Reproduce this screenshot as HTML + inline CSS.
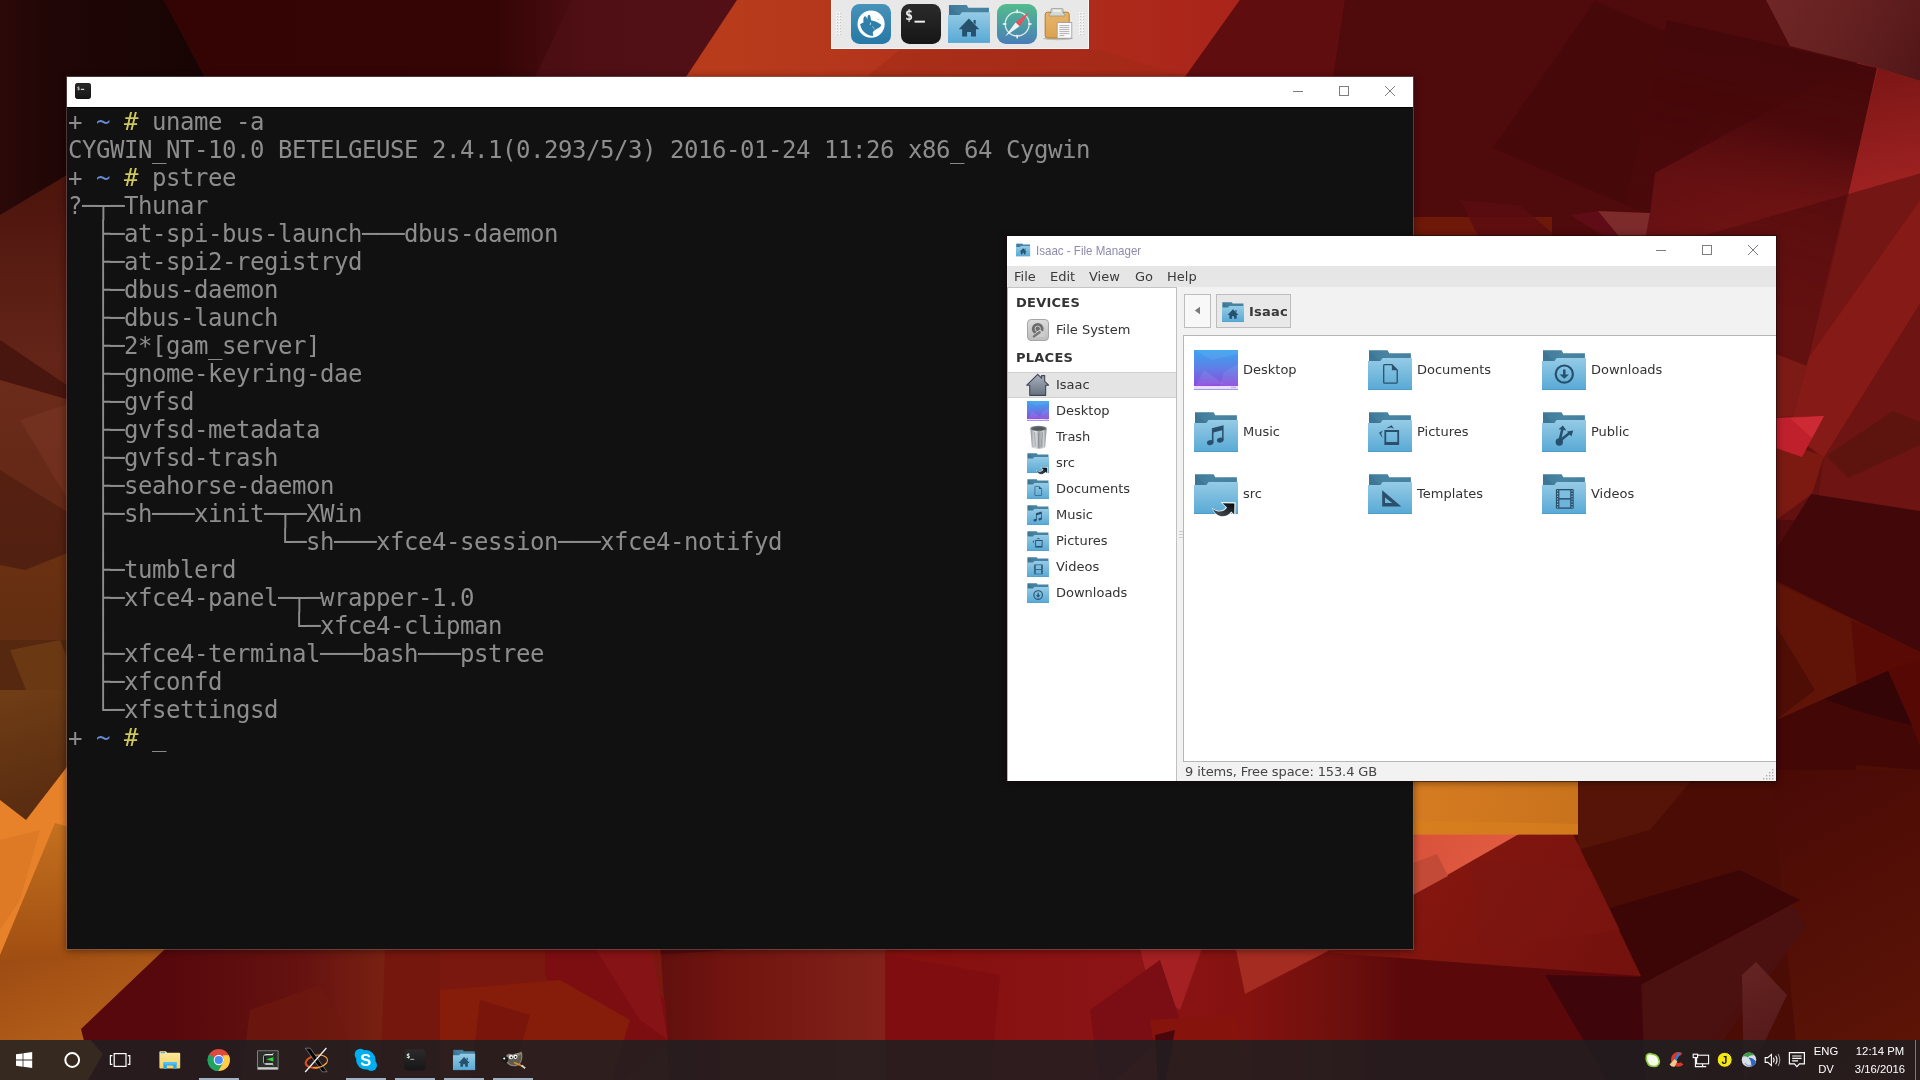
<!DOCTYPE html>
<html lang="en">
<head>
<meta charset="utf-8">
<title>Desktop</title>
<style>
*{box-sizing:border-box;margin:0;padding:0}
html,body{width:1920px;height:1080px;overflow:hidden;background:#4a0a0a;-webkit-font-smoothing:antialiased}
body{position:relative;font-family:"DejaVu Sans","Liberation Sans",sans-serif;font-size:13px;color:#333}
#wall{position:absolute;left:0;top:0;width:1920px;height:1080px;display:block}
.abs{position:absolute}
/* ---------- terminal ---------- */
#term{position:absolute;left:67px;top:77px;width:1346px;height:872px;background:#111;box-shadow:0 0 0 1px rgba(150,130,130,.4),0 1px 7px 1px rgba(0,0,0,.42)}
#term .tb{position:absolute;left:0;top:0;width:100%;height:30px;background:#fff;will-change:transform}
#term .body{position:absolute;left:0;top:30px;width:100%;height:842px;background:#111;border-top:1px solid #000}
#term pre{will-change:transform;position:absolute;left:1px;top:31px;font-family:"DejaVu Sans Mono","Liberation Mono",monospace;font-size:24px;line-height:28px;color:#8d8d8d;white-space:pre;letter-spacing:-.449px}
#term .b{color:#6789d6}
#term .y{color:#cfc85b}
.wbtn{position:absolute;top:0;height:30px;width:46px}
/* ---------- file manager ---------- */
#fm{position:absolute;left:1007px;top:236px;width:769px;height:545px;background:#f2f2f2;box-shadow:0 0 0 1px rgba(30,8,8,.55),0 1px 7px 1px rgba(0,0,0,.42);will-change:transform}
#fm .tb{position:absolute;left:0;top:0;width:100%;height:30px;background:#fff}
#fm .title{position:absolute;left:29px;top:0;line-height:29px;font-family:"Liberation Sans",sans-serif;font-size:13.4px;color:#8f8cab;white-space:nowrap;transform:scaleX(.862);transform-origin:0 0}
#fm .menu{position:absolute;left:0;top:30px;width:100%;height:21px;background:#e6e6e6}
#fm .menu span{position:absolute;top:0;line-height:21px;font-size:13px;color:#3a3a3a}
#fm .side{position:absolute;left:0;top:51px;width:170px;height:494px;background:#fff;border-left:1px solid #b4b4b4;border-right:1px solid #c0c0c0;border-top:1px solid #c4c4c4}
#fm .side .h{position:absolute;left:8px;font-weight:bold;font-size:13px;color:#333;line-height:16px;letter-spacing:.25px}
#fm .side .r{position:absolute;left:0;width:168px;height:26px}
#fm .side .r.sel{background:#e4e4e4;border-top:1px solid #d0d0d0;border-bottom:1px solid #d0d0d0}
#fm .side .r span{position:absolute;left:48px;top:0;line-height:26px;font-size:13px;color:#333}
#fm .side .r.sel span,#fm .side .r.sel svg{margin-top:-1px}
#fm .grip{position:absolute;left:171.5px;top:295px;width:4px;height:7px;border-top:1px solid #cfcfcf;border-bottom:1px solid #cfcfcf}
#fm .grip:after{content:"";position:absolute;left:0;top:2px;width:4px;height:1px;background:#cfcfcf}
#fm .pbtn{position:absolute;top:58px;height:34px;border:1px solid #bdbdbd;background:#f8f8f8}
#fm .pbtn.on{background:#e8e8e8}
#fm .pbtn b{position:absolute;left:32px;top:0;line-height:33px;font-size:13px;color:#383838;letter-spacing:.25px}
#fm .view{position:absolute;left:176px;top:99px;width:593px;height:427px;background:#fff;border:1px solid #b6b6b6;border-right:none}
#fm .it{position:absolute;width:170px;height:40px}
#fm .it span{position:absolute;left:49px;top:0;line-height:39px;font-size:13px;color:#333}
#fm .status{position:absolute;left:178px;top:526px;line-height:19px;font-size:13px;color:#444;letter-spacing:-.12px}
/* ---------- xfce panel ---------- */
#panel{will-change:transform;position:absolute;left:831px;top:0;width:258px;height:49px;background:#e8e8e8;border:1px solid #f8f8f8;border-top:none}
/* ---------- taskbar ---------- */
#task{position:absolute;left:0;top:1040px;width:1920px;height:40px;background:rgba(31,31,33,.85);will-change:transform}
#task .tx{position:absolute;color:#fff;font-family:"Liberation Sans",sans-serif;font-size:11.3px;line-height:14px;text-align:center}
#task .ul{position:absolute;top:38px;height:2px;width:40px;background:#9fb3c4}
</style>
</head>
<body>
<!--WALL-->
<svg id="wall" viewBox="0 0 1920 1080"><defs><linearGradient id="g1" gradientUnits="userSpaceOnUse" x1="0" y1="0" x2="200" y2="0"><stop offset="0" stop-color="#2b0909"/><stop offset="0.25" stop-color="#210606"/><stop offset="1" stop-color="#180404"/></linearGradient><linearGradient id="g2" gradientUnits="userSpaceOnUse" x1="200" y1="0" x2="740" y2="0"><stop offset="0" stop-color="#340404"/><stop offset="0.55" stop-color="#350505"/><stop offset="0.7" stop-color="#4a0d12"/><stop offset="1" stop-color="#551118"/></linearGradient><linearGradient id="g3" gradientUnits="userSpaceOnUse" x1="737" y1="0" x2="1240" y2="0"><stop offset="0" stop-color="#b83b1c"/><stop offset="0.5" stop-color="#b0301b"/><stop offset="1" stop-color="#aa241a"/></linearGradient><linearGradient id="g4" gradientUnits="userSpaceOnUse" x1="1650" y1="260" x2="1920" y2="100"><stop offset="0" stop-color="#6a1214"/><stop offset="0.45" stop-color="#7e1818"/><stop offset="1" stop-color="#9a2020"/></linearGradient><linearGradient id="g5" gradientUnits="userSpaceOnUse" x1="1770" y1="0" x2="1920" y2="80"><stop offset="0" stop-color="#702626"/><stop offset="0.5" stop-color="#642020"/><stop offset="1" stop-color="#521618"/></linearGradient><linearGradient id="g6" gradientUnits="userSpaceOnUse" x1="1880" y1="70" x2="1900" y2="190"><stop offset="0" stop-color="#7c1616"/><stop offset="1" stop-color="#a02222"/></linearGradient><linearGradient id="gB" gradientUnits="userSpaceOnUse" x1="1772" y1="44" x2="1716" y2="290"><stop offset="0" stop-color="#45080a"/><stop offset="0.35" stop-color="#47080a"/><stop offset="1" stop-color="#5a0c0e"/></linearGradient><linearGradient id="gBm" gradientUnits="userSpaceOnUse" x1="1772" y1="44" x2="1716" y2="290"><stop offset="0" stop-color="#fff" stop-opacity="1"/><stop offset="0.3" stop-color="#fff" stop-opacity="0.92"/><stop offset="0.6" stop-color="#fff" stop-opacity="0.4"/><stop offset="1" stop-color="#fff" stop-opacity="0"/></linearGradient><mask id="mB" maskUnits="userSpaceOnUse" x="1500" y="0" width="420" height="500"><polygon points="1667,20 1877,68 1795,429 1585,381" fill="url(#gBm)"/></mask><linearGradient id="g8" gradientUnits="userSpaceOnUse" x1="1780" y1="780" x2="1920" y2="1040"><stop offset="0" stop-color="#4a0a06"/><stop offset="1" stop-color="#5c1406"/></linearGradient><linearGradient id="g9" gradientUnits="userSpaceOnUse" x1="1745" y1="960" x2="1780" y2="1040"><stop offset="0" stop-color="#642422"/><stop offset="1" stop-color="#561a1a"/></linearGradient><linearGradient id="g10" gradientUnits="userSpaceOnUse" x1="1420" y1="850" x2="1640" y2="980"><stop offset="0" stop-color="#86170f"/><stop offset="1" stop-color="#72110e"/></linearGradient><linearGradient id="g11" gradientUnits="userSpaceOnUse" x1="1413" y1="834" x2="1500" y2="880"><stop offset="0" stop-color="#d8523a"/><stop offset="1" stop-color="#e25c42"/></linearGradient><linearGradient id="g12" gradientUnits="userSpaceOnUse" x1="1413" y1="781" x2="1578" y2="834"><stop offset="0" stop-color="#d67c22"/><stop offset="1" stop-color="#c8721c"/></linearGradient><linearGradient id="g13" gradientUnits="userSpaceOnUse" x1="860" y1="0" x2="1400" y2="0"><stop offset="0" stop-color="#84120f"/><stop offset="0.15" stop-color="#86100f"/><stop offset="0.5" stop-color="#8c1416"/><stop offset="0.72" stop-color="#84120f"/><stop offset="0.9" stop-color="#6c100d"/><stop offset="1" stop-color="#5c090b"/></linearGradient><linearGradient id="g14" gradientUnits="userSpaceOnUse" x1="652" y1="0" x2="885" y2="0"><stop offset="0" stop-color="#5f0f0d"/><stop offset="0.3" stop-color="#70140f"/><stop offset="1" stop-color="#82221a"/></linearGradient><linearGradient id="g15" gradientUnits="userSpaceOnUse" x1="165" y1="0" x2="440" y2="0"><stop offset="0" stop-color="#57080c"/><stop offset="0.5" stop-color="#651210"/><stop offset="0.85" stop-color="#7c2412"/><stop offset="1" stop-color="#761a0e"/></linearGradient><linearGradient id="g16" gradientUnits="userSpaceOnUse" x1="0" y1="950" x2="60" y2="1085"><stop offset="0" stop-color="#9c4a13"/><stop offset="1" stop-color="#b9631b"/></linearGradient><linearGradient id="g17" gradientUnits="userSpaceOnUse" x1="0" y1="200" x2="0" y2="560"><stop offset="0" stop-color="#4f160e"/><stop offset="0.45" stop-color="#642518"/><stop offset="0.7" stop-color="#572011"/><stop offset="1" stop-color="#522010"/></linearGradient><linearGradient id="g18" gradientUnits="userSpaceOnUse" x1="0" y1="560" x2="0" y2="700"><stop offset="0" stop-color="#6a3012"/><stop offset="1" stop-color="#5c2c10"/></linearGradient><linearGradient id="g19" gradientUnits="userSpaceOnUse" x1="0" y1="700" x2="40" y2="820"><stop offset="0" stop-color="#6e3c15"/><stop offset="1" stop-color="#582b10"/></linearGradient><linearGradient id="g20" gradientUnits="userSpaceOnUse" x1="0" y1="823" x2="0" y2="960"><stop offset="0" stop-color="#c4701f"/><stop offset="1" stop-color="#a04e12"/></linearGradient></defs><rect width="1920" height="1080" fill="#520b0d"/>
<polygon points="0,0 164,0 205,77 240,140 67,180 0,215" fill="url(#g1)"/>
<polygon points="164,0 737,0 686,77 640,150 240,140 205,77" fill="url(#g2)"/>
<polygon points="572,0 737,0 686,77 535,77" fill="#521016" fill-opacity="0.6"/>
<polygon points="737,0 1240,0 1185,77 1150,130 650,130 686,77" fill="url(#g3)"/>
<polygon points="900,50 1100,50 1185,77 1150,130 800,130" fill="#a02a16" fill-opacity="0.5"/>
<polygon points="1240,0 1345,0 1330,100 1300,240 1150,240 1185,77" fill="#600d10"/>
<polygon points="1345,0 1920,0 1920,240 1300,240 1330,100" fill="#4f0a0c"/>
<polygon points="1700,236.8 1920,173.7 1920,520 1700,520" fill="#621010"/>
<polygon points="1847,194.7 1920,173.7 1920,200 1809,357" fill="#741614"/>
<polygon points="1920,200 1809,357 1792.6,416.7 1800,440 1823.7,458 1920,304" fill="#861a16"/>
<polygon points="1920,304 1823.7,458 1815,520 1920,520" fill="#6e1412"/>
<polygon points="1776,354 1807,366 1792.6,416.7 1776,417" fill="#7c1a16"/>
<polygon points="1776,440 1824,456 1812,494 1776,520" fill="#7c1a12"/>
<polygon points="1595,1 1493,148 1650,215 1752,69" fill="#47080a"/>
<polygon points="1655,173 1920,29 1920,173.7 1600,265.5 1650,215" fill="url(#g4)"/>
<polygon points="1766,0 1790,46 1878,68 1920,81 1920,0" fill="url(#g5)"/>
<polygon points="1878,68 1920,81 1920,173 1848,194" fill="url(#g6)"/>
<rect x="1500" y="0" width="420" height="500" fill="url(#gB)" mask="url(#mB)"/>
<polygon points="1413,217 1552,217 1552,240 1413,240" fill="#6e1809"/>
<polygon points="1460,200 1520,205 1560,240 1480,240" fill="#5a0c12" fill-opacity="0.8"/>
<polygon points="1598,211 1644,236 1610,240 1570,215" fill="#600c16"/>
<polygon points="1598,211 1650,213 1645,240 1622,240" fill="#7c2a2a"/>
<polygon points="1770,418 1824,416 1802,457 1770,446" fill="#c0202c"/>
<polygon points="1790,418 1824,416 1812,438" fill="#cc2a34"/>
<polygon points="1826,456 1893,411 1920,422 1920,445 1848,478" fill="#5e140e"/>
<polygon points="1811,494 1920,511 1920,652 1776,581 1770,560" fill="#420809"/>
<polygon points="1776,581 1920,652 1920,760 1776,760" fill="#5a1006"/>
<polygon points="1776,583 1858,622 1857,687 1776,720" fill="#601408"/>
<polygon points="1776,626 1815,690 1776,720" fill="#4e0e06"/>
<polygon points="1851,620 1920,652 1920,662 1893,668 1857,687" fill="#5a0a04"/>
<polygon points="1776,720 1824,699 1888,671 1920,740 1920,800 1776,800" fill="#430806"/>
<polygon points="1888,671 1893,668 1920,660 1920,745" fill="#560804"/>
<polygon points="1824,699 1888,671 1912,725.5 1864,713" fill="#340506"/>
<polygon points="1856,765 1920,770 1920,800 1850,800" fill="#4e0e04"/>
<polygon points="1400,770 1920,770 1920,1085 1400,1085" fill="#4a0c05"/>
<polygon points="1770,770 1920,770 1920,1085 1800,1085" fill="url(#g8)"/>
<polygon points="1578,770 1700,770 1650,830 1578,850" fill="#561408"/>
<polygon points="1608,910 1780,888 1806,926 1670,1085 1640,1085" fill="#4a1010"/>
<polygon points="1644,984 1782,889 1806,927 1690,1085 1640,1085" fill="#4c1212" fill-opacity="0.7"/>
<polygon points="1610,908 1740,870 1800,900 1640,985" fill="#3c0606"/>
<polygon points="1756,962 1787,995 1744,1085 1742,975" fill="url(#g9)"/>
<polygon points="1400,950 1640,975 1645,1085 1400,1085" fill="#5a080a"/>
<polygon points="1545,975 1641,977 1645,1085 1610,1085" fill="#3e060b"/>
<polygon points="1519,834 1573,834 1641,976 1400,958 1400,900" fill="url(#g10)"/>
<polygon points="1470,860 1590,868 1620,930 1480,950" fill="#7c1611" fill-opacity="0.6"/>
<polygon points="1400,834 1519,834 1400,902" fill="url(#g11)"/>
<polygon points="1400,868 1437,854 1448,876 1400,902" fill="#c24a36"/>
<polygon points="1400,775 1578,775 1578,834.5 1400,834.5" fill="url(#g12)"/>
<polygon points="1400,820 1578,824 1578,834.5 1400,834.5" fill="#d8801e" fill-opacity="0.6"/>
<polygon points="860,940 1400,940 1400,1085 860,1085" fill="url(#g13)"/>
<polygon points="1138,940 1205,940 1180,1010 1150,990" fill="#a42022"/>
<polygon points="1236,950 1330,950 1245,994" fill="#a42c20"/>
<polygon points="1090,1010 1160,960 1180,1020 1110,1085 1100,1085" fill="#7a0e14"/>
<polygon points="1150,1020 1235,1015 1250,1085 1160,1085" fill="#86140c"/>
<polygon points="1155,1035 1175,1030 1165,1085 1158,1085" fill="#4a060c"/>
<polygon points="885,955 1000,975 990,1085 880,1085" fill="#7e0e11" fill-opacity="0.8"/>
<polygon points="652,955 885,940 885,1085 669,1085" fill="url(#g14)"/>
<polygon points="440,940 660,940 670,1085 440,1085" fill="#7a170e"/>
<polygon points="545,950 600,940 665,1000 668,1040 620,1085 545,975" fill="#7c0e12"/>
<polygon points="590,940 652,950 668,1040 640,1020" fill="#861315"/>
<polygon points="440,990 560,980 630,1020 610,1085 440,1085" fill="#861d0a"/>
<polygon points="480,1000 530,1015 510,1085 470,1085" fill="#7a150b"/>
<polygon points="165,940 440,940 440,1085 95,1085 81,1029" fill="url(#g15)"/>
<polygon points="250,1010 320,985 350,1040 350,1085 240,1085" fill="#6e1a0f" fill-opacity="0.7"/>
<polygon points="385,950 440,945 440,1085 380,1085" fill="#76170e"/>
<polygon points="0,820 60,820 180,930 165,949 81,1029 95,1085 0,1085" fill="url(#g16)"/>
<polygon points="0,215 67,175 80,175 80,600 0,600" fill="url(#g17)"/>
<polygon points="0,340 80,394 80,403 0,380" fill="#48160f"/>
<polygon points="0,380 80,403 80,520 0,470" fill="#7a3622" fill-opacity="0.45"/>
<polygon points="20,420 80,400 80,520" fill="#7c3824" fill-opacity="0.5"/>
<polygon points="0,565 25,570 80,548 80,720 0,720" fill="url(#g18)"/>
<polygon points="0,640 80,640 80,700 0,720" fill="#55280f"/>
<polygon points="10,650 60,640 80,690 30,700" fill="#7a4218" fill-opacity="0.6"/>
<polygon points="0,700 80,700 80,960 0,960" fill="#e8822a"/>
<polygon points="0,690 80,690 80,750 26,820 0,800" fill="url(#g19)"/>
<polygon points="55,823 80,830 80,960 0,960 0,955" fill="url(#g20)"/>
<polygon points="0,840 40,830 20,900 0,930" fill="#de7a26"/>
<polygon points="1330,940 1400,940 1400,958 1330,953" fill="#7c140f"/>
<polygon points="0,1040 140,1040 140,1080 0,1080" fill="#58090c"/>
<polygon points="0,1040 90.5,1040 103,1054 88,1080 0,1080" fill="#b9631b"/></svg>
<!--/WALL-->

<!--TERM-->
<div id="term">
<div class="tb"><svg style="position:absolute;left:8px;top:6px" width="16" height="16"><defs><linearGradient id="tig" x1="0" y1="0" x2="0" y2="1"><stop offset="0" stop-color="#2a2a2a"/><stop offset="1" stop-color="#161616"/></linearGradient></defs><rect x="0" y="0" width="16" height="16" rx="3.4" fill="url(#tig)" stroke="#0c0c0c" stroke-width=".6"/><text x="2" y="6.8" font-family="DejaVu Sans Mono,Liberation Mono,monospace" font-weight="bold" font-size="5" fill="#d8d8d8">$</text><rect x="5.8" y="5.8" width="3.4" height="1.1" fill="#e6e6e6"/></svg>
<svg class="wbtn" style="right:92px" width="46" height="30"><path d="M18,14.5 H28" stroke="#7d7d7d" stroke-width="1"/></svg>
<svg class="wbtn" style="right:46px" width="46" height="30"><rect x="18.5" y="9.5" width="9" height="9" fill="none" stroke="#7d7d7d" stroke-width="1"/></svg>
<svg class="wbtn" style="right:0" width="46" height="30"><path d="M18,9 L28,19 M28,9 L18,19" stroke="#7d7d7d" stroke-width="1" fill="none"/></svg></div>
<div class="body"></div>
<pre>+ <span class="b">~</span> <span class="y">#</span> uname -a
CYGWIN_NT-10.0 BETELGEUSE 2.4.1(0.293/5/3) 2016-01-24 11:26 x86_64 Cygwin
+ <span class="b">~</span> <span class="y">#</span> pstree
?─┬─Thunar
  ├─at-spi-bus-launch───dbus-daemon
  ├─at-spi2-registryd
  ├─dbus-daemon
  ├─dbus-launch
  ├─2*[gam_server]
  ├─gnome-keyring-dae
  ├─gvfsd
  ├─gvfsd-metadata
  ├─gvfsd-trash
  ├─seahorse-daemon
  ├─sh───xinit─┬─XWin
  │            └─sh───xfce4-session───xfce4-notifyd
  ├─tumblerd
  ├─xfce4-panel─┬─wrapper-1.0
  │             └─xfce4-clipman
  ├─xfce4-terminal───bash───pstree
  ├─xfconfd
  └─xfsettingsd
+ <span class="b">~</span> <span class="y">#</span> _</pre>
</div>
<!--/TERM-->

<!--FM-->

<svg width="0" height="0" style="position:absolute">
<defs>
<linearGradient id="ff" x1="0" y1="0" x2="0" y2="1"><stop offset="0" stop-color="#95cbe6"/><stop offset="1" stop-color="#58a9d5"/></linearGradient>
<linearGradient id="fb" x1="0" y1="0" x2="1" y2="0"><stop offset="0" stop-color="#3f7a99"/><stop offset="0.45" stop-color="#4a84a3"/><stop offset="1" stop-color="#46809f"/></linearGradient>
<linearGradient id="dk" x1="0" y1="0" x2="0" y2="1"><stop offset="0" stop-color="#3aa4f0"/><stop offset="0.45" stop-color="#5f7fe6"/><stop offset="1" stop-color="#9440da"/></linearGradient>
<linearGradient id="hs" x1="0" y1="0" x2="0" y2="1"><stop offset="0" stop-color="#aab2bf"/><stop offset="1" stop-color="#66717f"/></linearGradient>
<linearGradient id="tr" x1="0" y1="0" x2="1" y2="0"><stop offset="0" stop-color="#8e9296"/><stop offset="0.3" stop-color="#e4e6e8"/><stop offset="0.55" stop-color="#a2a6aa"/><stop offset="0.8" stop-color="#d0d2d4"/><stop offset="1" stop-color="#85898d"/></linearGradient>
<linearGradient id="hd" x1="0" y1="0" x2="0" y2="1"><stop offset="0" stop-color="#dcdcdc"/><stop offset="1" stop-color="#bcbcbc"/></linearGradient>
<linearGradient id="arw" x1="0" y1="1" x2="1" y2="0"><stop offset="0" stop-color="#555"/><stop offset="0.5" stop-color="#2a3238"/><stop offset="1" stop-color="#050505"/></linearGradient>
<symbol id="fold" viewBox="0 0 44 40">
<path d="M1,0.3 H19.6 L21.3,3.2 H42.9 V14 H1 Z" fill="url(#fb)"/>
<path d="M1,1 L12,11 H1 Z" fill="#3a7391" opacity=".55"/>
<path d="M0,11 H12.4 L14.6,8.1 H44 V40 H0 Z" fill="url(#ff)"/>
<rect x="0" y="39" width="44" height="1" fill="#4d9dca"/>
</symbol>
<symbol id="g-doc" viewBox="0 0 44 40"><path d="M16.6,14.7 H23.9 L29.2,20 V32.2 Q29.2,33.1 28.3,33.1 H16.6 Q15.7,33.1 15.7,32.2 V15.6 Q15.7,14.7 16.6,14.7 Z" fill="none" stroke="#2b516c" stroke-width="1.3"/><path d="M23.9,14.4 L29.6,20.2 H23.9 Z" fill="#2b516c"/></symbol>
<symbol id="g-down" viewBox="0 0 44 40"><circle cx="22.3" cy="24.1" r="8.6" fill="none" stroke="#27506c" stroke-width="2.2"/><path d="M21.05,19.4 H23.55 V24.4 H27 L22.3,28.8 L17.6,24.4 H21.05 Z" fill="#27506c"/></symbol>
<symbol id="g-music" viewBox="0 0 44 40"><g fill="#2a4f6b"><ellipse cx="16.2" cy="30.6" rx="3.3" ry="2.5" transform="rotate(-15 16.2 30.6)"/><ellipse cx="26.2" cy="28.2" rx="3.3" ry="2.5" transform="rotate(-15 26.2 28.2)"/><path d="M17.9,16.3 L29.6,13.2 V28.2 H28.1 V18.2 L19.5,20.5 V30.6 H17.9 Z"/></g></symbol>
<symbol id="g-pic" viewBox="0 0 44 40"><g fill="#2a4f6b"><path d="M16.4,18.1 H31.1 V33.1 H16.4 Z M18.2,19.9 V30 H29.3 V19.9 Z" fill-rule="evenodd"/><path d="M18,16.6 L23.6,13.3 L26,16.8 L23,15.6 Z"/><path d="M11,20.7 L14.8,18.6 L13.2,21.6 L14.8,26.6 Z"/></g></symbol>
<symbol id="g-pub" viewBox="0 0 44 40"><g fill="#27506c" stroke="#27506c"><circle cx="17.3" cy="30" r="3.7" stroke="none"/><path d="M18,27 L20.3,17.5" stroke-width="2.6" fill="none"/><path d="M19.5,27.6 L27.5,21" stroke-width="2.6" fill="none"/><path d="M20.9,13.6 L24.4,18.4 L16.6,17.2 Z" stroke="none"/><path d="M31.2,18.6 L29.4,24.4 L25,19.4 Z" stroke="none"/></g></symbol>
<symbol id="g-tmpl" viewBox="0 0 44 40"><path d="M14.2,16.2 V32.6 H33.3 Z M17,23.6 L24.3,29.1 H17 Z" fill="#2a4f6b" fill-rule="evenodd"/></symbol>
<symbol id="g-vid" viewBox="0 0 44 40"><g><rect x="13.9" y="15" width="17.8" height="19.7" rx="1.2" fill="#2a4f6b"/><rect x="17.4" y="16.3" width="10.8" height="7.8" fill="#7cbde0"/><rect x="17.4" y="25.6" width="10.8" height="7.8" fill="#6db4dc"/><g fill="#8cc6e4"><rect x="15" y="16.3" width="1.2" height="1.2"/><rect x="15" y="19" width="1.2" height="1.2"/><rect x="15" y="21.7" width="1.2" height="1.2"/><rect x="15" y="24.4" width="1.2" height="1.2"/><rect x="15" y="27.1" width="1.2" height="1.2"/><rect x="15" y="29.8" width="1.2" height="1.2"/><rect x="15" y="32.5" width="1.2" height="1.2"/><rect x="29.4" y="16.3" width="1.2" height="1.2"/><rect x="29.4" y="19" width="1.2" height="1.2"/><rect x="29.4" y="21.7" width="1.2" height="1.2"/><rect x="29.4" y="24.4" width="1.2" height="1.2"/><rect x="29.4" y="27.1" width="1.2" height="1.2"/><rect x="29.4" y="29.8" width="1.2" height="1.2"/><rect x="29.4" y="32.5" width="1.2" height="1.2"/></g></g></symbol>
<symbol id="g-home" viewBox="0 0 44 40"><g fill="#27506c"><path d="M21.9,14.6 L32.8,25.9 H11.2 Z"/><path d="M14.8,25 H29.3 V33.4 H24.1 V28.6 H20 V33.4 H14.8 Z"/><path d="M26.8,16 H29 V21 L26.8,18.8 Z"/></g></symbol>
<symbol id="g-link" viewBox="0 0 44 44"><path d="M26.5,28 L41.6,28.2 L41.4,43 L37.4,39 C32,45.6 22,45.4 17.8,33.4 C23.4,38.4 29.2,37.2 31.8,33.2 Z" fill="#fff" opacity=".9"/><path d="M28.6,29.2 L40.4,29.4 L40.2,40.6 L37.2,37.4 C32,44.4 23,44.2 18.8,35 C24.4,39.2 30.2,38 33,33.6 Z" fill="url(#arw)"/></symbol>
<symbol id="desk" viewBox="0 0 44 40"><rect width="44" height="40" fill="url(#dk)"/><path d="M0,0 L18,10 L44,4 V0 Z" fill="#fff" opacity=".07"/><path d="M2,36 L10,20 L30,34 Z" fill="#fff" opacity=".08"/><path d="M26,36 L30,22 L44,14 V36 Z" fill="#fff" opacity=".07"/><rect y="36" width="44" height="3" fill="#f0dcf8"/><rect y="39" width="44" height="1" fill="#8ea0ee"/><rect x="37" y="36.6" width="5" height="1.6" fill="#cbb6dc"/></symbol>
<symbol id="house" viewBox="0 0 22 22"><path d="M11,1.2 L14.6,4.8 V2.4 H17.4 V7.6 L21,11.2 H18.3 V20.5 H3.7 V11.2 H1 Z" fill="url(#hs)" stroke="#3c4654" stroke-width="1" stroke-linejoin="round"/></symbol>
<symbol id="hdd" viewBox="0 0 22 22"><rect x="0.5" y="0.5" width="21" height="21" rx="3.6" fill="url(#hd)" stroke="#a6a6a6"/><circle cx="10.7" cy="9.8" r="5.9" fill="#6c6c6c"/><path d="M10.7,9.8 L18,13.6 V18 H8.4 Z" fill="#cdcdcd"/><circle cx="10.7" cy="9.8" r="2.7" fill="#6c6c6c" stroke="#d6d6d6" stroke-width=".9"/><path d="M12.8,13 L6.8,17.6" stroke="#d2d2d2" stroke-width="3.8" stroke-linecap="round"/><path d="M12.6,13.2 L6.8,17.6" stroke="#787878" stroke-width="2.5" stroke-linecap="round"/></symbol>
<symbol id="trash" viewBox="0 0 22 24" preserveAspectRatio="none"><path d="M3.2,3.4 L4.6,21.6 Q11,24.6 17.4,21.6 L18.8,3.4 Z" fill="url(#tr)"/><ellipse cx="11" cy="3.4" rx="7.8" ry="2.6" fill="#7b7f83"/><ellipse cx="11" cy="3.6" rx="6.4" ry="1.8" fill="#55595d"/><path d="M7.4,7 L7.9,21.4 M11,7.4 V22.2 M14.6,7 L14.1,21.4" stroke="#7a7e82" stroke-width=".9" opacity=".7" fill="none"/></symbol>
</defs></svg>
<div id="fm">
<div class="tb"><svg class="wbtn" style="right:92px" width="46" height="30"><path d="M18,14.5 H28" stroke="#7d7d7d" stroke-width="1"/></svg>
<svg class="wbtn" style="right:46px" width="46" height="30"><rect x="18.5" y="9.5" width="9" height="9" fill="none" stroke="#7d7d7d" stroke-width="1"/></svg>
<svg class="wbtn" style="right:0" width="46" height="30"><path d="M18,9 L28,19 M28,9 L18,19" stroke="#7d7d7d" stroke-width="1" fill="none"/></svg></div>
<svg style="position:absolute;left:8.8px;top:7.2px;overflow:visible" width="14.4" height="13.8" viewBox="0 0 44 40"><use href="#fold"/><use href="#g-home"/></svg>
<div class="title">Isaac - File Manager</div>
<div class="menu"><span style="left:7px">File</span><span style="left:43px">Edit</span><span style="left:82px">View</span><span style="left:128px">Go</span><span style="left:160px">Help</span></div>
<div class="side">
<div class="h" style="top:7px">DEVICES</div>
<div class="h" style="top:62px">PLACES</div>
<div class="r" style="top:29px"><svg style="position:absolute;left:19px;top:2px" width="22" height="22"><use href="#hdd" width="22" height="22"/></svg><span>File System</span></div>
<div class="r sel" style="top:84px"><svg style="position:absolute;left:17.4px;top:0.6px" width="25.4" height="24"><use href="#house" width="25.4" height="24"/></svg><span>Isaac</span></div>
<div class="r" style="top:110px"><svg style="position:absolute;left:19px;top:3px" width="22" height="20"><use href="#desk" width="22" height="20"/></svg><span>Desktop</span></div>
<div class="r" style="top:136px"><svg style="position:absolute;left:18.6px;top:0.8px" width="23" height="24.6"><use href="#trash" width="23" height="24.6"/></svg><span>Trash</span></div>
<div class="r" style="top:162px"><svg style="position:absolute;left:19px;top:3px;overflow:visible" width="22" height="20" viewBox="0 0 44 40"><use href="#fold"/><use href="#g-link" width="44" height="44"/></svg><span>src</span></div>
<div class="r" style="top:188px"><svg style="position:absolute;left:19px;top:3px;overflow:visible" width="22" height="20" viewBox="0 0 44 40"><use href="#fold"/><use href="#g-doc"/></svg><span>Documents</span></div>
<div class="r" style="top:214px"><svg style="position:absolute;left:19px;top:3px;overflow:visible" width="22" height="20" viewBox="0 0 44 40"><use href="#fold"/><use href="#g-music"/></svg><span>Music</span></div>
<div class="r" style="top:240px"><svg style="position:absolute;left:19px;top:3px;overflow:visible" width="22" height="20" viewBox="0 0 44 40"><use href="#fold"/><use href="#g-pic"/></svg><span>Pictures</span></div>
<div class="r" style="top:266px"><svg style="position:absolute;left:19px;top:3px;overflow:visible" width="22" height="20" viewBox="0 0 44 40"><use href="#fold"/><use href="#g-vid"/></svg><span>Videos</span></div>
<div class="r" style="top:292px"><svg style="position:absolute;left:19px;top:3px;overflow:visible" width="22" height="20" viewBox="0 0 44 40"><use href="#fold"/><use href="#g-down"/></svg><span>Downloads</span></div>
</div>
<div class="grip"></div>
<div class="pbtn" style="left:177px;width:27px"><svg width="25" height="31" style="position:absolute;left:0;top:0"><path d="M15,11.8 V19.2 L9.8,15.5 Z" fill="#7a7a7a"/></svg></div>
<div class="pbtn on" style="left:209px;width:75px"><svg style="position:absolute;left:5px;top:7px;overflow:visible" width="22" height="20" viewBox="0 0 44 40"><use href="#fold"/><use href="#g-home"/></svg><b>Isaac</b></div>
<div class="view">
<div class="it" style="left:10px;top:14px"><svg style="position:absolute;left:0px;top:0px" width="44" height="40"><use href="#desk" width="44" height="40"/></svg><span>Desktop</span></div>
<div class="it" style="left:184px;top:14px"><svg style="position:absolute;left:0px;top:0px;overflow:visible" width="44" height="40" viewBox="0 0 44 40"><use href="#fold"/><use href="#g-doc"/></svg><span>Documents</span></div>
<div class="it" style="left:358px;top:14px"><svg style="position:absolute;left:0px;top:0px;overflow:visible" width="44" height="40" viewBox="0 0 44 40"><use href="#fold"/><use href="#g-down"/></svg><span>Downloads</span></div>
<div class="it" style="left:10px;top:76px"><svg style="position:absolute;left:0px;top:0px;overflow:visible" width="44" height="40" viewBox="0 0 44 40"><use href="#fold"/><use href="#g-music"/></svg><span>Music</span></div>
<div class="it" style="left:184px;top:76px"><svg style="position:absolute;left:0px;top:0px;overflow:visible" width="44" height="40" viewBox="0 0 44 40"><use href="#fold"/><use href="#g-pic"/></svg><span>Pictures</span></div>
<div class="it" style="left:358px;top:76px"><svg style="position:absolute;left:0px;top:0px;overflow:visible" width="44" height="40" viewBox="0 0 44 40"><use href="#fold"/><use href="#g-pub"/></svg><span>Public</span></div>
<div class="it" style="left:10px;top:138px"><svg style="position:absolute;left:0px;top:0px;overflow:visible" width="44" height="40" viewBox="0 0 44 40"><use href="#fold"/><use href="#g-link" width="44" height="44"/></svg><span>src</span></div>
<div class="it" style="left:184px;top:138px"><svg style="position:absolute;left:0px;top:0px;overflow:visible" width="44" height="40" viewBox="0 0 44 40"><use href="#fold"/><use href="#g-tmpl"/></svg><span>Templates</span></div>
<div class="it" style="left:358px;top:138px"><svg style="position:absolute;left:0px;top:0px;overflow:visible" width="44" height="40" viewBox="0 0 44 40"><use href="#fold"/><use href="#g-vid"/></svg><span>Videos</span></div>
</div>
<div class="status">9 items, Free space: 153.4 GB</div>
<svg style="position:absolute;right:1px;bottom:1px" width="12" height="12"><g fill="#b0b0b0"><rect x="9" y="1" width="1.4" height="1.4"/><rect x="6" y="4" width="1.4" height="1.4"/><rect x="9" y="4" width="1.4" height="1.4"/><rect x="3" y="7" width="1.4" height="1.4"/><rect x="6" y="7" width="1.4" height="1.4"/><rect x="9" y="7" width="1.4" height="1.4"/><rect x="0" y="10" width="1.4" height="1.4"/><rect x="3" y="10" width="1.4" height="1.4"/><rect x="6" y="10" width="1.4" height="1.4"/><rect x="9" y="10" width="1.4" height="1.4"/></g></svg>
</div>
<!--/FM-->

<!--PANEL-->
<div id="panel">
<svg width="258" height="49" style="position:absolute;left:-1px;top:0" viewBox="831 0 258 49">
<defs>
<linearGradient id="px" x1="0" y1="0" x2="0" y2="1"><stop offset="0" stop-color="#4793b9"/><stop offset="1" stop-color="#2778a6"/></linearGradient>
<linearGradient id="pt" x1="0" y1="0" x2="0" y2="1"><stop offset="0" stop-color="#2b2b2b"/><stop offset="1" stop-color="#161616"/></linearGradient>
<linearGradient id="pc" x1="0" y1="0" x2="0" y2="1"><stop offset="0" stop-color="#53bb8c"/><stop offset="0.5" stop-color="#4d9ea2"/><stop offset="1" stop-color="#4a7cb8"/></linearGradient>
<linearGradient id="pcl" x1="0" y1="0" x2="0" y2="1"><stop offset="0" stop-color="#e8b66a"/><stop offset="1" stop-color="#dba352"/></linearGradient>
</defs>
<rect x="836" y="12" width="1.5" height="1.5" fill="#fdfdfd"/><rect x="837" y="13" width="1" height="1" fill="#c2c2c2"/><rect x="839" y="12" width="1.5" height="1.5" fill="#fdfdfd"/><rect x="840" y="13" width="1" height="1" fill="#c2c2c2"/><rect x="836" y="15" width="1.5" height="1.5" fill="#fdfdfd"/><rect x="837" y="16" width="1" height="1" fill="#c2c2c2"/><rect x="839" y="15" width="1.5" height="1.5" fill="#fdfdfd"/><rect x="840" y="16" width="1" height="1" fill="#c2c2c2"/><rect x="836" y="18" width="1.5" height="1.5" fill="#fdfdfd"/><rect x="837" y="19" width="1" height="1" fill="#c2c2c2"/><rect x="839" y="18" width="1.5" height="1.5" fill="#fdfdfd"/><rect x="840" y="19" width="1" height="1" fill="#c2c2c2"/><rect x="836" y="21" width="1.5" height="1.5" fill="#fdfdfd"/><rect x="837" y="22" width="1" height="1" fill="#c2c2c2"/><rect x="839" y="21" width="1.5" height="1.5" fill="#fdfdfd"/><rect x="840" y="22" width="1" height="1" fill="#c2c2c2"/><rect x="836" y="24" width="1.5" height="1.5" fill="#fdfdfd"/><rect x="837" y="25" width="1" height="1" fill="#c2c2c2"/><rect x="839" y="24" width="1.5" height="1.5" fill="#fdfdfd"/><rect x="840" y="25" width="1" height="1" fill="#c2c2c2"/><rect x="836" y="27" width="1.5" height="1.5" fill="#fdfdfd"/><rect x="837" y="28" width="1" height="1" fill="#c2c2c2"/><rect x="839" y="27" width="1.5" height="1.5" fill="#fdfdfd"/><rect x="840" y="28" width="1" height="1" fill="#c2c2c2"/><rect x="836" y="30" width="1.5" height="1.5" fill="#fdfdfd"/><rect x="837" y="31" width="1" height="1" fill="#c2c2c2"/><rect x="839" y="30" width="1.5" height="1.5" fill="#fdfdfd"/><rect x="840" y="31" width="1" height="1" fill="#c2c2c2"/><rect x="836" y="33" width="1.5" height="1.5" fill="#fdfdfd"/><rect x="837" y="34" width="1" height="1" fill="#c2c2c2"/><rect x="839" y="33" width="1.5" height="1.5" fill="#fdfdfd"/><rect x="840" y="34" width="1" height="1" fill="#c2c2c2"/><rect x="1079" y="12" width="1.5" height="1.5" fill="#fdfdfd"/><rect x="1080" y="13" width="1" height="1" fill="#c2c2c2"/><rect x="1082" y="12" width="1.5" height="1.5" fill="#fdfdfd"/><rect x="1083" y="13" width="1" height="1" fill="#c2c2c2"/><rect x="1079" y="15" width="1.5" height="1.5" fill="#fdfdfd"/><rect x="1080" y="16" width="1" height="1" fill="#c2c2c2"/><rect x="1082" y="15" width="1.5" height="1.5" fill="#fdfdfd"/><rect x="1083" y="16" width="1" height="1" fill="#c2c2c2"/><rect x="1079" y="18" width="1.5" height="1.5" fill="#fdfdfd"/><rect x="1080" y="19" width="1" height="1" fill="#c2c2c2"/><rect x="1082" y="18" width="1.5" height="1.5" fill="#fdfdfd"/><rect x="1083" y="19" width="1" height="1" fill="#c2c2c2"/><rect x="1079" y="21" width="1.5" height="1.5" fill="#fdfdfd"/><rect x="1080" y="22" width="1" height="1" fill="#c2c2c2"/><rect x="1082" y="21" width="1.5" height="1.5" fill="#fdfdfd"/><rect x="1083" y="22" width="1" height="1" fill="#c2c2c2"/><rect x="1079" y="24" width="1.5" height="1.5" fill="#fdfdfd"/><rect x="1080" y="25" width="1" height="1" fill="#c2c2c2"/><rect x="1082" y="24" width="1.5" height="1.5" fill="#fdfdfd"/><rect x="1083" y="25" width="1" height="1" fill="#c2c2c2"/><rect x="1079" y="27" width="1.5" height="1.5" fill="#fdfdfd"/><rect x="1080" y="28" width="1" height="1" fill="#c2c2c2"/><rect x="1082" y="27" width="1.5" height="1.5" fill="#fdfdfd"/><rect x="1083" y="28" width="1" height="1" fill="#c2c2c2"/><rect x="1079" y="30" width="1.5" height="1.5" fill="#fdfdfd"/><rect x="1080" y="31" width="1" height="1" fill="#c2c2c2"/><rect x="1082" y="30" width="1.5" height="1.5" fill="#fdfdfd"/><rect x="1083" y="31" width="1" height="1" fill="#c2c2c2"/><rect x="1079" y="33" width="1.5" height="1.5" fill="#fdfdfd"/><rect x="1080" y="34" width="1" height="1" fill="#c2c2c2"/><rect x="1082" y="33" width="1.5" height="1.5" fill="#fdfdfd"/><rect x="1083" y="34" width="1" height="1" fill="#c2c2c2"/>
<!-- xfce -->
<rect x="851" y="4" width="40" height="40" rx="8.5" fill="url(#px)"/>
<circle cx="871.1" cy="24.1" r="13.6" fill="#fff"/>
<path d="M860,24.6 C861,23.4 862.6,23 863.6,22.6 C863,19.6 863.6,16.4 865,16.2 C866.2,16.2 867,18.2 867.4,19.8 C867.2,17 867.8,14.8 869,14.8 C870.4,15 870.8,18 871,20.2 C874.4,20.8 878.6,22.4 881.2,24.8 C881.4,26 880,27.4 878,28.2 C875.6,29.6 873.6,30.6 872.8,32.2 L873.2,36 C868,35.8 862.4,32 861,27.2 C860.8,26 860.4,25.2 860,24.6 Z" fill="#2e80ab"/>
<path d="M870.4,22.6 q.8,1.6 -.6,2.4 M872.4,26.8 l1.2,.8 M873.8,28.8 l.8,.4" stroke="#fff" stroke-width=".7" fill="none"/>
<path d="M877.6,18.6 l.6,1.6 l1.2,-1.4" stroke="#9cc6dc" stroke-width=".7" fill="none"/>
<!-- terminal -->
<rect x="901" y="4" width="40" height="40" rx="8.5" fill="url(#pt)"/>
<text x="905" y="20" font-family="DejaVu Sans Mono,Liberation Mono,monospace" font-weight="bold" font-size="13.4" fill="#efefef">$</text>
<text x="915" y="18.8" font-family="DejaVu Sans Mono,Liberation Mono,monospace" font-weight="bold" font-size="13" fill="#efefef" stroke="#efefef" stroke-width=".7" textLength="9.5" lengthAdjust="spacingAndGlyphs">_</text>
<!-- home folder -->
<svg x="948" y="4.6" width="42" height="38.2" viewBox="0 0 44 40" preserveAspectRatio="none"><use href="#fold"/><use href="#g-home"/></svg>
<!-- compass -->
<rect x="997" y="4" width="40" height="40" rx="9" fill="url(#pc)"/>
<circle cx="1017.2" cy="24" r="12" fill="none" stroke="#e6f2f0" stroke-width="1.3" opacity=".9"/>
<g fill="#eef6f4"><rect x="1016.4" y="9.6" width="1.6" height="3.6"/><rect x="1016.4" y="34.8" width="1.6" height="3.6"/><rect x="1002.8" y="23.2" width="3.6" height="1.6"/><rect x="1028" y="23.2" width="3.6" height="1.6"/></g>
<path d="M1029.4,11.8 L1019.6,26.2 L1015.6,22.6 Z" fill="#ee4f5a"/>
<path d="M1005,36.4 L1019.6,26.2 L1015.6,22.6 Z" fill="#f2f2f2"/>
<!-- clipboard -->
<ellipse cx="1058" cy="38.6" rx="15" ry="1.6" fill="#000" opacity=".18"/>
<rect x="1045.2" y="12.2" width="24" height="25.8" rx="2.4" fill="url(#pcl)" stroke="#b9791f" stroke-width="1"/>
<path d="M1052,8.6 h10 q1,0 1,1 v3.4 l2,1.6 v1.4 h-16 v-1.4 l2,-1.6 v-3.4 q0,-1 1,-1 z" fill="#d6d8d2" stroke="#8c9090" stroke-width=".7"/>
<rect x="1053" y="9.6" width="8" height="2.4" fill="#eceee8"/>
<rect x="1057.2" y="22.6" width="14.6" height="15.6" fill="#fbfbfb" stroke="#9a9a9a" stroke-width=".8"/>
<g stroke="#a8a8a8" stroke-width=".9"><path d="M1059.4,25.6 h10 M1059.4,27.6 h10 M1059.4,29.6 h10 M1059.4,31.6 h10 M1059.4,33.6 h10 M1059.4,35.6 h5"/></g>
</svg>
</div>
<!--/PANEL-->

<!--TASK-->
<div id="task">
<svg width="1920" height="40" style="position:absolute;left:0;top:0" viewBox="0 1040 1920 40">
<defs>
<linearGradient id="tfold" x1="0" y1="0" x2="0" y2="1"><stop offset="0" stop-color="#ffe9a2"/><stop offset="1" stop-color="#f6cf60"/></linearGradient>
<linearGradient id="tterm" x1="0" y1="0" x2="0" y2="1"><stop offset="0" stop-color="#2b2b2b"/><stop offset="1" stop-color="#161616"/></linearGradient>
</defs>
<!-- start -->
<g fill="#fff"><path d="M16,1054.3 L22.6,1053.4 V1059.6 H16 Z"/><path d="M23.4,1053.3 L32.2,1052 V1059.6 H23.4 Z"/><path d="M16,1060.4 H22.6 V1066.7 L16,1065.8 Z"/><path d="M23.4,1060.4 H32.2 V1068.1 L23.4,1066.8 Z"/></g>
<!-- cortana -->
<circle cx="72.2" cy="1060" r="6.9" fill="none" stroke="#fff" stroke-width="2"/>
<!-- task view -->
<g fill="none" stroke="#fff" stroke-width="1.2"><rect x="114.2" y="1053.6" width="11.8" height="12.8"/><path d="M112.4,1055.6 H110.4 V1064.4 H112.4 M127.8,1055.6 H129.8 V1064.4 H127.8"/></g>
<!-- explorer -->
<path d="M159.4,1052.2 q0,-1 1,-1 h5.4 l1.4,1.6 h12 q1,0 1,1 v14 q0,.8 -1,.8 h-18.8 q-1,0 -1,-.8 z" fill="url(#tfold)"/>
<rect x="160.6" y="1052.2" width="4.6" height="1" fill="#3d9ee8"/>
<path d="M163.4,1069 v-6 q0,-1 1,-1 h11.2 q1,0 1,1 v6 h-3.4 v-3.6 h-6.4 v3.6 z" fill="#2ba8ee"/>
<path d="M163.4,1063 q0,-1 1,-1 h11.2 q1,0 1,1 v1.4 h-13.2 z" fill="#4cc0fa"/>
<!-- chrome -->
<circle cx="218.8" cy="1060" r="11.1" fill="#dd4b3e"/>
<path d="M218.8,1060 L209.2,1054.4 A11.1,11.1 0 0 0 213.4,1069.7 Z M213.4,1069.7 A11.1,11.1 0 0 0 218.8,1071.1 L224,1063 L218.8,1060 Z" fill="#1ea362"/>
<path d="M209.2,1054.45 A11.1,11.1 0 0 0 218.3,1071.1 L223.5,1062.6 L214,1062.8 Z" fill="#1ea362"/>
<path d="M229.9,1060 A11.1,11.1 0 0 1 218.3,1071.1 L224.2,1061 L223,1055.2 H228.8 A11.1,11.1 0 0 1 229.9,1060 Z" fill="#ffcd46"/>
<circle cx="218.8" cy="1060" r="5.2" fill="#f4f4f4"/>
<circle cx="218.8" cy="1060" r="4.1" fill="#4a8bf5"/>
<!-- green term -->
<rect x="257" y="1050.2" width="21.6" height="19.8" rx="1" fill="#7e7e7e"/>
<rect x="258" y="1051.2" width="19.6" height="15.8" fill="#2c2e2c"/>
<rect x="258" y="1067.4" width="19.6" height="1.8" fill="#cfcfcf"/>
<path d="M273,1054.6 H266.6 Q264,1054.6 264,1057.2 V1061.4 Q264,1064 266.6,1064 H273" stroke="#e8e8e8" stroke-width="1.3" fill="none"/>
<path d="M264.8,1055.4 V1063.4" stroke="#0c0c0c" stroke-width="1.4"/>
<path d="M266.2,1059.3 L273.4,1057.2 V1061.4 Z" fill="#2fdc3a"/>
<path d="M272,1054.2 l1.6,-.8 M272,1064.4 l1.6,.8" stroke="#bdbdbd" stroke-width=".8"/>
<!-- X -->
<clipPath id="xl"><path d="M300,1045 H313 L318,1080 H300 Z"/></clipPath>
<clipPath id="xr"><path d="M316,1045 H332 V1080 H312 Z"/></clipPath>
<ellipse cx="316.4" cy="1061.6" rx="11.2" ry="6.4" fill="none" stroke="#f0a63a" stroke-width="1" transform="rotate(-10 316.4 1061.6)" clip-path="url(#xr)"/>
<ellipse cx="316.4" cy="1061.6" rx="10.8" ry="6" fill="none" stroke="#e3541a" stroke-width="2" transform="rotate(-10 316.4 1061.6)" clip-path="url(#xl)"/>
<path d="M305.4,1048.2 H310.2 L327,1071.8 H322.2 Z" fill="#050505" stroke="#cfcfcf" stroke-width=".45"/>
<path d="M326.4,1048 L305.2,1072" stroke="#f2f2f2" stroke-width="1.3"/>
<path d="M313,1067.6 Q321,1068.6 326.4,1063" fill="none" stroke="#f2a13a" stroke-width="1.1"/>
<!-- skype -->
<g fill="#00aff0"><circle cx="365.8" cy="1059.8" r="9.7"/><circle cx="360.4" cy="1054.4" r="5.7"/><circle cx="371.3" cy="1065.2" r="5.7"/></g>
<text x="360.3" y="1066" font-family="Liberation Sans,sans-serif" font-weight="bold" font-size="16.5" fill="#fff">S</text>
<!-- term -->
<rect x="404" y="1049.2" width="21.8" height="21.4" rx="4.4" fill="url(#tterm)"/>
<text x="406.2" y="1057.6" font-family="DejaVu Sans Mono,Liberation Mono,monospace" font-weight="bold" font-size="6.6" fill="#eee">$_</text>
<!-- folder home -->
<svg x="452.8" y="1049.6" width="22.6" height="20.6" viewBox="0 0 44 40" preserveAspectRatio="none"><use href="#fold"/><use href="#g-home"/></svg>
<!-- gimp -->
<path d="M505.6,1059 C505,1054.6 509,1052.6 512.4,1054.6 C515.6,1053.4 519.4,1053 521.6,1051.6 C523,1055 522.6,1060 520.4,1063.4 C517.6,1067 511.6,1067.2 508.6,1064.6 C506.8,1063.2 505.8,1061 505.6,1059 Z" fill="#8a8476"/>
<path d="M508,1058 C509,1055.6 512,1055.2 514.6,1056.6 C517,1055.8 519.4,1055.4 521,1054.4 C521.6,1057.6 521,1061 519.4,1063 C516.6,1065.6 511.6,1065.8 509.4,1063.6 C508.2,1062.2 507.6,1060 508,1058 Z" fill="#5e5a50"/>
<circle cx="505" cy="1059.6" r="3.3" fill="#1a1a1a"/><circle cx="504.2" cy="1058.6" r="1" fill="#fff"/>
<circle cx="511" cy="1057.2" r="2.1" fill="#fff"/><circle cx="515.4" cy="1056.8" r="2.1" fill="#fff"/><circle cx="511.4" cy="1057.4" r=".9" fill="#111"/><circle cx="515.6" cy="1057" r=".9" fill="#111"/>
<path d="M514,1062.6 L523.4,1066.6" stroke="#d98d2e" stroke-width="1.6"/><path d="M521.6,1065.6 L525.2,1068.2" stroke="#d8d4c8" stroke-width="1.8"/>
<!-- tray -->
<path d="M1646.6,1055.2 q2.4,-2.6 6,-1 q5,.6 6,4.6 q1.6,3 0,5.4 q-2,3 -5.6,2 q-4.4,.2 -5.4,-3.4 q-2,-2.6 -1,-7.6 z" fill="#f4fbe9" stroke="#8dc63f" stroke-width="1.6"/>
<path d="M1682.4,1053.2 A7.4,7.4 0 1 0 1683.6,1064.6 L1680.6,1062.2 A3.6,3.6 0 1 1 1680,1056 Z" fill="#d9382c"/>
<path d="M1678.4,1052.6 l2.2,1 l-4.2,7 l-2.4,-1.2 z" fill="#2f7fd0"/>
<path d="M1669.6,1064.4 l4.6,-5.2 l3.2,1.8 l-2.6,5.4 q-3,1 -5.2,-2 z" fill="#f1c98c"/>
<g fill="none" stroke="#fff" stroke-width="1.1"><rect x="1696.6" y="1055.2" width="12" height="8.6"/><path d="M1702.6,1063.8 V1066.4 M1699,1066.6 H1706.2"/><rect x="1693.2" y="1054.2" width="4.4" height="3.4" fill="#2a2224"/><path d="M1695.4,1057.6 V1066.6 H1699"/></g>
<circle cx="1724.7" cy="1059.8" r="7.5" fill="#f5e616" stroke="#1a1a1a" stroke-width="1"/>
<text x="1721.4" y="1063.6" font-family="Liberation Sans,sans-serif" font-weight="bold" font-size="10.5" fill="#1a1a1a">J</text>
<circle cx="1749" cy="1059.8" r="7.3" fill="#d9dfe6"/>
<path d="M1742.4,1057 A7.3,7.3 0 0 1 1755,1055.6 C1752,1054.6 1749,1055.2 1748,1057.4 C1746,1056 1744,1056 1742.4,1057 Z" fill="#3f9b46"/>
<path d="M1748.6,1058 C1751,1057.4 1754,1059 1756,1061.6 A7.3,7.3 0 0 1 1750.4,1067 C1752,1064 1751,1060.6 1748.6,1058 Z" fill="#2f66c4"/>
<path d="M1745,1063 A5,5 0 0 0 1752,1065" stroke="#8fa4bd" stroke-width="1.2" fill="none"/>
<g fill="none" stroke="#fff" stroke-width="1.1"><path d="M1765.2,1057.6 H1767.8 L1771.4,1054.4 V1065.6 L1767.8,1062.4 H1765.2 Z"/><path d="M1773.4,1057.6 Q1775,1060 1773.4,1062.4"/><path d="M1775.6,1055.8 Q1778.4,1060 1775.6,1064.2"/><path d="M1778,1054 Q1781.6,1060 1778,1066" stroke="#9a9a9a"/></g>
<g fill="none" stroke="#fff" stroke-width="1.2"><path d="M1789.4,1052.6 H1804.4 V1063.8 H1799.4 L1796.9,1066.6 L1794.4,1063.8 H1789.4 Z"/><path d="M1792.2,1056 H1801.6 M1792.2,1058.4 H1801.6 M1792.2,1060.8 H1798"/></g>
<rect x="1915" y="1040" width="1" height="40" fill="#7a7a7a"/>
</svg>
<div class="tx" style="left:1806px;top:3.5px;width:40px">ENG</div>
<div class="tx" style="left:1806px;top:22px;width:40px">DV</div>
<div class="tx" style="left:1850px;top:3.5px;width:60px">12:14 PM</div>
<div class="tx" style="left:1850px;top:22px;width:60px">3/16/2016</div>
<div class="ul" style="left:199px"></div><div class="ul" style="left:346px"></div><div class="ul" style="left:395px"></div><div class="ul" style="left:444px"></div><div class="ul" style="left:493px"></div>
</div>
<!--/TASK-->
</body>
</html>
